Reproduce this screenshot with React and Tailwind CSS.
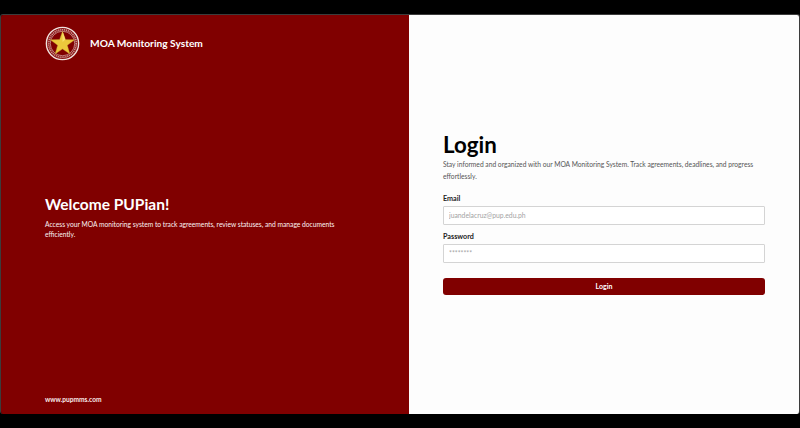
import React from 'react'

const font = { fontFamily: 'Lato, "Noto Sans", sans-serif' }

function Seal() {
  return (
    <svg viewBox="0 0 36 36" className="w-[35px] h-[35px] shrink-0">
      <circle cx="18" cy="18" r="16.6" fill="#8c1414" stroke="#f0e2de" strokeWidth="1.4" />
      <circle cx="18" cy="18" r="14.2" fill="none" stroke="#c99a96" strokeWidth="1.6" strokeDasharray="1.2 0.8" />
      <circle cx="18" cy="18" r="12.6" fill="#800000" stroke="#e8d4d0" strokeWidth="0.6" />
      <polygon
        points="18,5.5 21,14 30.5,14.2 23,19.8 25.6,28.8 18,23.6 10.4,28.8 13,19.8 5.5,14.2 15,14"
        fill="#ecc83c"
        stroke="#b8912a"
        strokeWidth="0.4"
      />
      <polygon points="18,5.5 21,14 18,16.5" fill="#f7df6a" />
    </svg>
  )
}

function Field({ label, type, placeholder, className }) {
  return (
    <div className={className}>
      <label className="block text-[7.2px] leading-[10px] font-bold text-[#222] mb-[2px]">
        {label}
      </label>
      <input
        type={type}
        placeholder={placeholder}
        readOnly
        className="block w-full h-[19px] bg-white border border-[#d4d4d4] rounded-[1px] px-[5px] text-[6.8px] placeholder:text-[#a3a3a3] outline-none"
      />
    </div>
  )
}

export default function App() {
  return (
    <div className="w-[800px] h-[428px] bg-black py-[14px] overflow-hidden" style={font}>
      <div className="h-[400px] flex rounded-[3px] overflow-hidden border-x border-t border-[#3c3c3c]">
        <div className="w-[408px] bg-[#800000] text-white flex flex-col justify-between pl-[44px] pr-[70px] pt-[11px] pb-[10px]">
          <div className="flex items-center gap-[10px]">
            <Seal />
            <span className="text-[10.2px] font-bold">MOA Monitoring System</span>
          </div>
          <div className="mb-[24px]">
            <h1 className="text-[15.5px] leading-[24px] font-bold mb-[3px]">Welcome PUPian!</h1>
            <p className="text-[6.7px] leading-[10px] text-[#fbf2f2]">
              Access your MOA monitoring system to track agreements, review statuses, and manage documents efficiently.
            </p>
          </div>
          <span className="text-[6.6px] leading-[10px] font-bold text-[#f8eaea]">www.pupmms.com</span>
        </div>
        <div className="flex-1 bg-[#fdfdfd] flex flex-col justify-center pl-[34px] pr-[34px] pb-[2px]">
          <h2 className="text-[22.3px] leading-[24px] font-bold text-black mb-[1px]">Login</h2>
          <p className="text-[6.7px] leading-[12px] text-[#555] mb-[12px]">
            Stay informed and organized with our MOA Monitoring System. Track agreements, deadlines, and progress effortlessly.
          </p>
          <Field label="Email" type="text" placeholder="juandelacruz@pup.edu.ph" className="mb-[7px]" />
          <Field label="Password" type="password" placeholder="********" className="mb-[15px]" />
          <button className="w-full h-[17px] bg-[#800000] text-white text-[7px] font-bold rounded-[3px]">
            Login
          </button>
        </div>
      </div>
    </div>
  )
}
